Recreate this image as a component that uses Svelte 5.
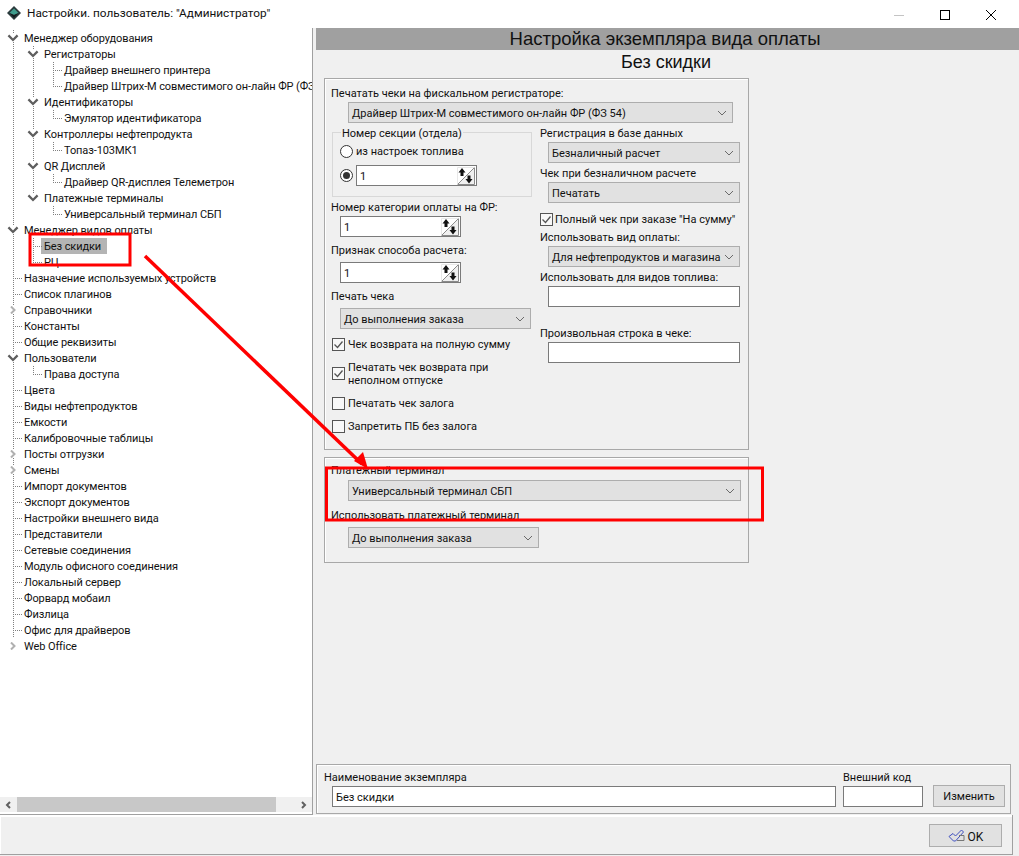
<script lang="ts">
  interface TreeNode {
    label: string;
    open?: boolean;
    closed?: boolean;
    selected?: boolean;
    children?: TreeNode[];
  }

  const leaf = (label: string): TreeNode => ({ label });

  const tree: TreeNode[] = [
    {
      label: 'Менеджер оборудования',
      open: true,
      children: [
        { label: 'Регистраторы', open: true, children: [leaf('Драйвер внешнего принтера'), leaf('Драйвер Штрих-М совместимого он-лайн ФР (ФЗ 54)')] },
        { label: 'Идентификаторы', open: true, children: [leaf('Эмулятор идентификатора')] },
        { label: 'Контроллеры нефтепродукта', open: true, children: [leaf('Топаз-103МК1')] },
        { label: 'QR Дисплей', open: true, children: [leaf('Драйвер QR-дисплея Телеметрон')] },
        { label: 'Платежные терминалы', open: true, children: [leaf('Универсальный терминал СБП')] }
      ]
    },
    {
      label: 'Менеджер видов оплаты',
      open: true,
      children: [{ label: 'Без скидки', selected: true }, leaf('РЦ')]
    },
    leaf('Назначение используемых устройств'),
    leaf('Список плагинов'),
    { label: 'Справочники', closed: true },
    leaf('Константы'),
    leaf('Общие реквизиты'),
    { label: 'Пользователи', open: true, children: [leaf('Права доступа')] },
    leaf('Цвета'),
    leaf('Виды нефтепродуктов'),
    leaf('Емкости'),
    leaf('Калибровочные таблицы'),
    { label: 'Посты отгрузки', closed: true },
    { label: 'Смены', closed: true },
    leaf('Импорт документов'),
    leaf('Экспорт документов'),
    leaf('Настройки внешнего вида'),
    leaf('Представители'),
    leaf('Сетевые соединения'),
    leaf('Модуль офисного соединения'),
    leaf('Локальный сервер'),
    leaf('Форвард мобаил'),
    leaf('Физлица'),
    leaf('Офис для драйверов'),
    { label: 'Web Office', closed: true }
  ];

  // flatten the tree, remembering which guide lines each row has to draw
  function flatten(nodes: TreeNode[], guides: boolean[] = []) {
    const rows: { node: TreeNode; guides: boolean[]; last: boolean }[] = [];
    nodes.forEach((node, i) => {
      const last = i === nodes.length - 1;
      rows.push({ node, guides, last });
      if (node.children) rows.push(...flatten(node.children, [...guides, !last || guides.length === 0]));
    });
    return rows;
  }

  const rows = flatten(tree);
</script>

{#snippet chevron()}
  <svg class="chev" viewBox="0 0 10 6" aria-hidden="true"><path d="M1 1l4 4 4-4" fill="none" stroke="#6a6a6a" stroke-width="1" /></svg>
{/snippet}

{#snippet select(text: string, cls: string)}
  <div class="select {cls}"><span>{text}</span>{@render chevron()}</div>
{/snippet}

{#snippet spin(cls: string)}
  <div class="input {cls}">
    <span>1</span>
    <svg class="spin" viewBox="0 0 18 18" aria-hidden="true">
      <path d="M0.5 17.5L17.5 0.5V17.5Z" fill="#f0f0f0" stroke="#8a8a8a" />
      <path d="M0.5 17.5V0.5H17.5" fill="none" stroke="#e8e8e8" />
      <path d="M5 1L8.5 5.500H6.500V9H3.500V5.500H1.500Z" fill="#111" />
      <path d="M12 16.500L8.500 12H10.500V8.500H13.500V12H15.500Z" fill="#111" />
    </svg>
  </div>
{/snippet}

{#snippet check(text: string, checked: boolean, cls: string)}
  <div class="check {cls}">
    <span class="box">
      {#if checked}
        <svg viewBox="0 0 11 11" aria-hidden="true"><path d="M1.5 5.5l3 3 5-6" fill="none" stroke="#555" stroke-width="1.3" /></svg>
      {/if}
    </span>
    <span class="check-text">{text}</span>
  </div>
{/snippet}

<div class="window">
  <header class="titlebar">
    <svg class="app-icon" viewBox="0 0 16 16" aria-hidden="true">
      <path d="M8 1L15 8L8 15L1 8Z" fill="#2b3a3c" />
      <path d="M8 3.5L12.5 8L8 10L3.5 8Z" fill="#3f9c8c" />
      <path d="M8 10L12.5 8L8 13L3.5 8Z" fill="#141c1e" />
    </svg>
    <span class="title">Настройки. пользователь: "Администратор"</span>
    <div class="controls">
      <svg viewBox="0 0 46 20" aria-hidden="true"><path d="M18 12.5h10" stroke="#c4c4c4" /></svg>
      <svg viewBox="0 0 46 20" aria-hidden="true"><rect x="18.5" y="7.5" width="9" height="9" fill="none" stroke="#000" /></svg>
      <svg viewBox="0 0 46 20" aria-hidden="true"><path d="M18 7l10 10M28 7l-10 10" stroke="#000" /></svg>
    </div>
  </header>

  <div class="main">
    <aside class="sidebar">
      <div class="tree">
        {#each rows as { node, guides, last }}
          <div class="row">
            {#each guides as on}
              <span class="cell">{#if on}<i class="vline"></i>{/if}</span>
            {/each}
            <span class="cell">
              {#if !(last && guides.length === 0)}<i class="vline" class:half={last}></i>{/if}
              {#if node.open}
                <svg class="toggle" viewBox="0 0 10 7" aria-hidden="true"><path d="M1 1.2l4 4 4-4" fill="none" stroke="#5e5e5e" stroke-width="2" /></svg>
              {:else if node.closed}
                <svg class="toggle" viewBox="0 0 10 8" aria-hidden="true"><path d="M3 0.5l3.500 3.500-3.500 3.500" fill="none" stroke="#b0b0b0" stroke-width="2" /></svg>
              {:else}
                <i class="hline"></i>
              {/if}
            </span>
            <span class="label" class:selected={node.selected}>{node.label}</span>
          </div>
        {/each}
      </div>
      <div class="hscroll">
        <svg viewBox="0 0 8 8" aria-hidden="true"><path d="M5.5 1L2.5 4l3 3" fill="none" stroke="#606060" stroke-width="2" /></svg>
        <div class="thumb"></div>
        <svg viewBox="0 0 8 8" aria-hidden="true"><path d="M2.5 1l3 3-3 3" fill="none" stroke="#606060" stroke-width="2" /></svg>
      </div>
    </aside>

    <section class="content">
      <h1>Настройка экземпляра вида оплаты</h1>
      <h2>Без скидки</h2>

      <div class="group fiscal">
        <div class="lbl">Печатать чеки на фискальном регистраторе:</div>
        {@render select('Драйвер Штрих-М совместимого он-лайн ФР (ФЗ 54)', 'fr-select')}

        <div class="columns">
          <div class="col-left">
            <div class="section">
              <span class="legend">Номер секции (отдела)</span>
              <div class="radio-row first">
                <span class="radio"></span>
                <span class="radio-text">из настроек топлива</span>
              </div>
              <div class="radio-row second">
                <span class="radio on"></span>
                {@render spin('spin-wide')}
              </div>
            </div>
            <div class="lbl m2">Номер категории оплаты на ФР:</div>
            {@render spin('spin-field m-1')}
            <div class="lbl m5">Признак способа расчета:</div>
            {@render spin('spin-field m4')}
            <div class="lbl m5">Печать чека</div>
            {@render select('До выполнения заказа', 'left-select m4')}
            {@render check('Чек возврата на полную сумму', true, 'm7')}
            {@render check('Печатать чек возврата при неполном отпуске', true, 'm8 two-line')}
            {@render check('Печатать чек залога', false, 'm9')}
            {@render check('Запретить ПБ без залога', false, 'm7')}
          </div>

          <div class="col-right">
            <div class="lbl">Регистрация в базе данных</div>
            {@render select('Безналичный расчет', 'right-select m-1')}
            <div class="lbl m2">Чек при безналичном расчете</div>
            {@render select('Печатать', 'right-select m-1')}
            {@render check('Полный чек при заказе "На сумму"', true, 'm8 flush')}
            <div class="lbl m2">Использовать вид оплаты:</div>
            {@render select('Для нефтепродуктов и магазина', 'right-select m-1')}
            <div class="lbl m2">Использовать для видов топлива:</div>
            <div class="input right-input m-1"></div>
            <div class="lbl m18">Произвольная строка в чеке:</div>
            <div class="input right-input m-1"></div>
          </div>
        </div>
      </div>

      <div class="group terminal">
        <div class="lbl">Платежный терминал</div>
        {@render select('Универсальный терминал СБП', 'term-select')}
        <div class="lbl m5b">Использовать платежный терминал</div>
        {@render select('До выполнения заказа', 'term-mode')}
      </div>

      <div class="group footer">
        <div class="name-col">
          <div class="lbl">Наименование экземпляра</div>
          <div class="input name-input"><span>Без скидки</span></div>
        </div>
        <div class="code-col">
          <div class="lbl">Внешний код</div>
          <div class="input code-input"></div>
        </div>
        <button class="btn change">Изменить</button>
      </div>
    </section>
  </div>

  <footer class="bottombar">
    <button class="btn ok">
      <svg viewBox="0 0 17 13" aria-hidden="true">
        <path d="M1 7.500L5 4.500L7.500 7L13.500 1L15.500 3L7.500 12H5.500Z" fill="none" stroke="#3f4fc0" />
        <path d="M11 6.500H16V11.500H9" fill="none" stroke="#777" />
      </svg>
      <span>OK</span>
    </button>
  </footer>

  <svg class="marks" viewBox="0 0 1019 856" aria-hidden="true">
    <g fill="none" stroke="#f00" stroke-width="3">
      <rect x="30" y="234" width="100" height="31" />
      <rect x="326.500" y="468" width="436" height="52" />
      <path d="M145 256L362 464" stroke-width="3.500" />
    </g>
    <path d="M354 461L363 452L368 469Z" fill="#f00" />
  </svg>
</div>

<style>
  :global(body) {
    margin: 0;
    background: #f0f0f0;
  }

  .window {
    position: relative;
    width: 1019px;
    height: 856px;
    display: flex;
    flex-direction: column;
    overflow: hidden;
    background: #f0f0f0;
    color: #111;
    font-family: Roboto, sans-serif;
    font-size: 11px;
    line-height: 16px;
  }

  .titlebar {
    height: 28px;
    flex-shrink: 0;
    display: flex;
    align-items: center;
    padding: 0 0 3px 6px;
    box-sizing: border-box;
    background: #fff;
  }

  .app-icon {
    width: 16px;
    height: 16px;
  }

  .title {
    margin-left: 5px;
    font-size: 11.8px;
  }

  .controls {
    margin-left: auto;
    display: flex;
    margin-right: 5px;
  }

  .controls svg {
    width: 46px;
    height: 20px;
  }

  .main {
    flex: 1;
    display: flex;
    min-height: 0;
  }

  .sidebar {
    width: 312px;
    flex-shrink: 0;
    display: flex;
    flex-direction: column;
    background: #fff;
    border-right: 1px solid #a0a0a0;
    border-bottom: 1px solid #a0a0a0;
  }

  .tree {
    flex: 1;
    padding: 2px 0 0 3px;
    overflow: hidden;
    white-space: nowrap;
    letter-spacing: -0.1px;
  }

  .row {
    display: flex;
    height: 16px;
  }

  .cell {
    position: relative;
    width: 20px;
    flex-shrink: 0;
  }

  .vline {
    position: absolute;
    left: 10px;
    top: 0;
    bottom: 0;
    width: 1px;
    background: linear-gradient(#808080 50%, transparent 50%) 0 0 / 1px 2px repeat-y;
  }

  .vline.half {
    bottom: 8px;
  }

  .hline {
    position: absolute;
    left: 10px;
    top: 8px;
    width: 10px;
    height: 1px;
    background: linear-gradient(90deg, #808080 50%, transparent 50%) 0 0 / 2px 1px repeat-x;
  }

  .toggle {
    position: absolute;
    left: 4px;
    top: 4px;
    width: 12px;
    height: 8px;
    background: #fff;
  }

  .label {
    height: 16px;
    line-height: 18px;
    padding: 0 2px 0 1px;
  }

  .label.selected {
    background: #b4b4b4;
    margin-left: -2px;
    padding: 0 6px 0 3px;
  }

  .hscroll {
    height: 15px;
    margin-bottom: 2px;
    display: flex;
    align-items: center;
    background: #f0f0f0;
  }

  .hscroll svg {
    width: 17px;
    height: 8px;
    flex-shrink: 0;
  }

  .thumb {
    width: 259px;
    height: 15px;
    background: #c8c8c8;
  }

  .hscroll svg:last-child {
    margin-left: auto;
  }

  .content {
    flex: 1;
    padding-left: 3px;
    display: flex;
    flex-direction: column;
    min-width: 0;
  }

  h1,
  h2 {
    margin: 0;
    font-family: 'Liberation Sans', sans-serif;
    font-size: 18px;
    font-weight: 400;
    text-align: center;
    line-height: 22px;
  }

  h1 {
    background: #a0a0a0;
    padding-right: 5px;
    font-size: 18.5px;
  }

  h2 {
    width: 700px;
    height: 28px;
    line-height: 24px;
  }

  .group {
    border: 1px solid #a8a8a8;
    box-shadow: inset 1px 1px 0 #fff;
    box-sizing: border-box;
  }

  .fiscal {
    margin-left: 8px;
    width: 425px;
    height: 372px;
    padding: 6px 0 0 6px;
  }

  .terminal {
    margin: 7px 0 0 8px;
    width: 425px;
    height: 106px;
    padding: 4px 0 0 6px;
  }

  .footer {
    margin-top: auto;
    margin-bottom: 1px;
    width: 695px;
    height: 50px;
    padding: 4px 0 0 7px;
    display: flex;
  }

  .lbl {
    height: 16px;
    line-height: 18px;
    white-space: nowrap;
  }

  .select,
  .input {
    height: 21px;
    box-sizing: border-box;
    display: flex;
    align-items: center;
    padding: 0 3px;
  }

  .select > span,
  .input > span,
  .radio-text,
  .check-text,
  .btn > span {
    margin-top: 2px;
  }

  .select {
    justify-content: space-between;
    background: #e1e1e1;
    border: 1px solid #adadad;
    margin-top: 1px;
    white-space: nowrap;
  }

  .input {
    background: #fff;
    border: 1px solid #7a7a7a;
  }

  .chev {
    width: 10px;
    height: 6px;
    margin-right: 2px;
  }

  .spin {
    margin-left: auto;
    margin-right: -2px;
    width: 18px;
    height: 18px;
  }

  .fr-select {
    width: 385px;
    margin-left: 17px;
  }

  .columns {
    display: flex;
    margin-top: 2px;
  }

  .col-left {
    width: 209px;
    flex-shrink: 0;
    padding-top: 7px;
  }

  .section {
    position: relative;
    width: 200px;
    height: 65px;
    margin-left: 1px;
    box-sizing: border-box;
    border: 1px solid #d8d8d8;
  }

  .legend {
    position: absolute;
    left: 8px;
    top: -7px;
    padding: 0 1px;
    background: #f0f0f0;
  }

  .radio-row {
    display: flex;
    align-items: center;
    gap: 3px;
    padding-left: 7px;
  }

  .radio-row.first {
    height: 16px;
    margin-top: 10px;
  }

  .radio-row.second {
    margin-top: 6px;
  }

  .radio {
    width: 11px;
    height: 11px;
    border: 1px solid #333;
    border-radius: 50%;
    flex-shrink: 0;
    position: relative;
    background: #fff;
  }

  .radio.on::after {
    content: '';
    position: absolute;
    inset: 2px;
    border-radius: 50%;
    background: #333;
  }

  .spin-wide {
    width: 121px;
  }

  .spin-field {
    width: 121px;
    margin-left: 9px;
  }

  .left-select {
    width: 191px;
    margin-left: 9px;
  }

  .right-select,
  .right-input {
    width: 192px;
    margin-left: 8px;
  }

  .term-select {
    width: 393px;
    margin-left: 17px;
    margin-top: 2px;
  }

  .term-mode {
    width: 191px;
    margin-left: 17px;
    margin-top: 4px;
  }

  .check {
    display: flex;
    align-items: center;
    gap: 3px;
    height: 16px;
    margin-left: 1px;
  }

  .check.flush {
    margin-left: 0;
    gap: 2px;
  }

  .check.two-line {
    height: 26px;
  }

  .box {
    width: 11px;
    height: 11px;
    border: 1px solid #555;
    flex-shrink: 0;
    background: #f8f8f8;
    display: flex;
  }

  .check-text {
    white-space: nowrap;
  }

  .two-line .check-text {
    white-space: normal;
    width: 175px;
    line-height: 13px;
  }

  .m-1 { margin-top: 1px; }
  .m2 { margin-top: 2px; }
  .m4 { margin-top: 4px; }
  .m5 { margin-top: 5px; }
  .m5b { margin-top: 6px; }
  .m7 { margin-top: 7px; }
  .m8 { margin-top: 8px; }
  .m9 { margin-top: 9px; }
  .m18 { margin-top: 18px; }

  .name-col,
  .code-col {
    display: flex;
    flex-direction: column;
  }

  .name-col {
    width: 519px;
  }

  .name-input {
    margin: 1px 0 0 8px;
    width: 504px;
  }

  .code-input {
    margin-top: 1px;
    width: 80px;
  }

  .btn {
    font: inherit;
    color: inherit;
    background: #e1e1e1;
    border: 1px solid #adadad;
    padding: 0;
    display: flex;
    align-items: center;
    justify-content: center;
  }

  .change {
    width: 72px;
    height: 22px;
    margin: 16px 0 0 10px;
    padding-top: 2px;
  }

  .bottombar {
    width: 1013px;
    height: 40px;
    margin-bottom: 1px;
    flex-shrink: 0;
    box-sizing: border-box;
    border-right: 1px solid #a0a0a0;
    border-bottom: 1px solid #a0a0a0;
    box-shadow: inset 1px 2px 0 #fff;
    display: flex;
    justify-content: flex-end;
    padding: 9px 10px 0 0;
  }

  .ok {
    width: 73px;
    height: 23px;
    gap: 3px;
    font-size: 12px;
  }

  .ok svg {
    width: 17px;
    height: 13px;
  }

  .marks {
    position: absolute;
    inset: 0;
    pointer-events: none;
  }
</style>
